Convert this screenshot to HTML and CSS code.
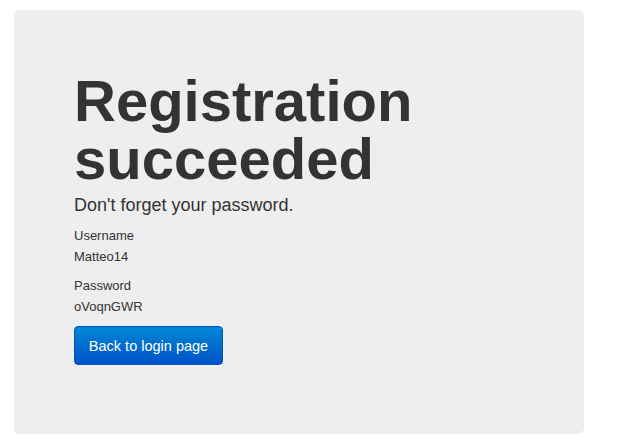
FILE: index.html
```html
<!DOCTYPE html>
<html>
<head>
<meta charset="utf-8">
<link rel="stylesheet" href="styles.css">
</head>
<body>
<div class="page">
  <div class="jumbotron">
    <h1 class="title">Registration succeeded</h1>
    <p class="lead">Don't forget your password.</p>
    <div class="field">
      <div class="label">Username</div>
      <div class="value">Matteo14</div>
    </div>
    <div class="field">
      <div class="label">Password</div>
      <div class="value">oVoqnGWR</div>
    </div>
    <button class="btn">Back to login page</button>
  </div>
</div>
</body>
</html>
```
FILE: styles.css
```css
html, body {
  margin: 0;
  padding: 0;
  background: #fff;
}
body {
  font-family: "Liberation Sans", Arial, Helvetica, sans-serif;
  color: #333;
}
.page {
  padding: 10px 0 0 14px;
}
.jumbotron {
  width: 570px;
  box-sizing: border-box;
  height: 424px;
  background: #eeeeee;
  border-radius: 6px;
  padding: 62px 60px 0 60px;
}
.title {
  margin: 0;
  width: 400px;
  font-size: 58px;
  line-height: 58px;
  font-weight: bold;
  color: #333;
}
.lead {
  margin: 7px 0 0 0;
  font-size: 18px;
  line-height: 20px;
}
.field {
  margin-top: 12px;
  font-size: 13px;
}
.label {
  line-height: 18px;
}
.value {
  margin-top: 3px;
  line-height: 18px;
}
.field + .field {
  margin-top: 11px;
}
.btn {
  margin-top: 10px;
  display: block;
  width: 149px;
  height: 39px;
  padding: 0;
  border: 1px solid #0055b3;
  border-radius: 4px;
  background: linear-gradient(#0088d6, #0052c8);
  color: #fff;
  font-family: "Liberation Sans", Arial, Helvetica, sans-serif;
  font-size: 14.5px;
}
```
